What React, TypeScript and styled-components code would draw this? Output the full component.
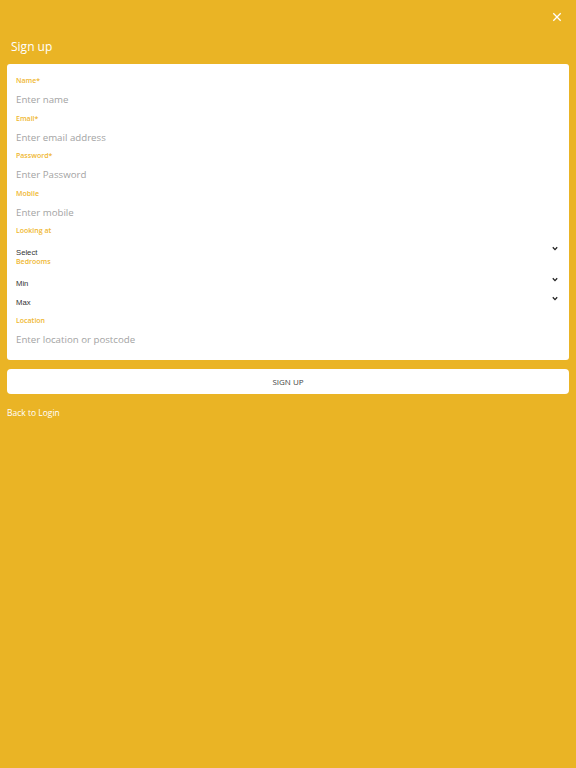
import styled, { createGlobalStyle } from 'styled-components'

const GlobalStyle = createGlobalStyle`
  html, body {
    margin: 0;
    padding: 0;
    background: #eab425;
  }
  * {
    box-sizing: border-box;
  }
`

const Page = styled.div`
  min-height: 100vh;
  padding: 0 7px;
  font-family: 'Open Sans', 'Liberation Sans', sans-serif;
`

const TopBar = styled.div`
  display: flex;
  justify-content: flex-end;
  height: 34px;
  padding: 12px 7px 0 0;
`

const CloseButton = styled.button`
  width: 10px;
  height: 10px;
  padding: 0;
  border: none;
  background: none;
  display: flex;
  cursor: pointer;
`

const Title = styled.h1`
  margin: 0;
  padding-left: 4px;
  height: 30px;
  font-size: 12px;
  line-height: 26px;
  font-weight: 400;
  color: #fff;
`

const Card = styled.form`
  background: #fff;
  border-radius: 3px;
  padding: 11px 11px 7px 9px;
`

const Label = styled.div<{ $gap?: number }>`
  height: 12px;
  margin-top: ${(p) => p.$gap ?? 0}px;
  font-size: 7px;
  line-height: 12px;
  font-weight: 600;
  color: #efb731;
`

const TextInput = styled.div`
  height: 25.5px;
  font-size: 9.7px;
  line-height: 25.5px;
  color: #a3a3a3;
`

const SelectRow = styled.div`
  display: flex;
  justify-content: space-between;
  height: 19px;
`

const SelectValue = styled.span`
  padding-top: 11px;
  font-family: 'Liberation Sans', Arial, sans-serif;
  font-size: 7.7px;
  line-height: 10px;
  color: #333;
`

const Chevron = styled.svg`
  width: 6px;
  height: 5px;
  margin-top: 8.5px;
`

const SubmitButton = styled.button`
  display: block;
  width: 100%;
  height: 25px;
  margin-top: 9.5px;
  border: none;
  border-radius: 4px;
  background: #fff;
  font-family: 'Open Sans', 'Liberation Sans', sans-serif;
  font-size: 8px;
  line-height: 24px;
  color: #444;
`

const BackLink = styled.a`
  display: block;
  margin-top: 13px;
  font-size: 8.5px;
  line-height: 12px;
  font-weight: 500;
  color: #fff;
  text-decoration: none;
`

const ChevronIcon = () => (
  <Chevron viewBox="0 0 6 5">
    <path d="M0.8 1.2 L3 3.6 L5.2 1.2" fill="none" stroke="#222" strokeWidth="1.3" />
  </Chevron>
)

const Select = ({ value }: { value: string }) => (
  <SelectRow>
    <SelectValue>{value}</SelectValue>
    <ChevronIcon />
  </SelectRow>
)

export default function App() {
  return (
    <Page>
      <GlobalStyle />
      <TopBar>
        <CloseButton aria-label="Close">
          <svg width="10" height="10" viewBox="0 0 10 10">
            <path d="M1.3 1.3 L8.7 8.7 M8.7 1.3 L1.3 8.7" stroke="#fff" strokeWidth="1.3" />
          </svg>
        </CloseButton>
      </TopBar>
      <Title>Sign up</Title>
      <Card>
        <Label>Name*</Label>
        <TextInput>Enter name</TextInput>
        <Label>Email*</Label>
        <TextInput>Enter email address</TextInput>
        <Label>Password*</Label>
        <TextInput>Enter Password</TextInput>
        <Label>Mobile</Label>
        <TextInput>Enter mobile</TextInput>
        <Label>Looking at</Label>
        <Select value="Select" />
        <Label>Bedrooms</Label>
        <Select value="Min" />
        <Select value="Max" />
        <Label $gap={9}>Location</Label>
        <TextInput>Enter location or postcode</TextInput>
      </Card>
      <SubmitButton type="button">SIGN UP</SubmitButton>
      <BackLink href="#">Back to Login</BackLink>
    </Page>
  )
}
